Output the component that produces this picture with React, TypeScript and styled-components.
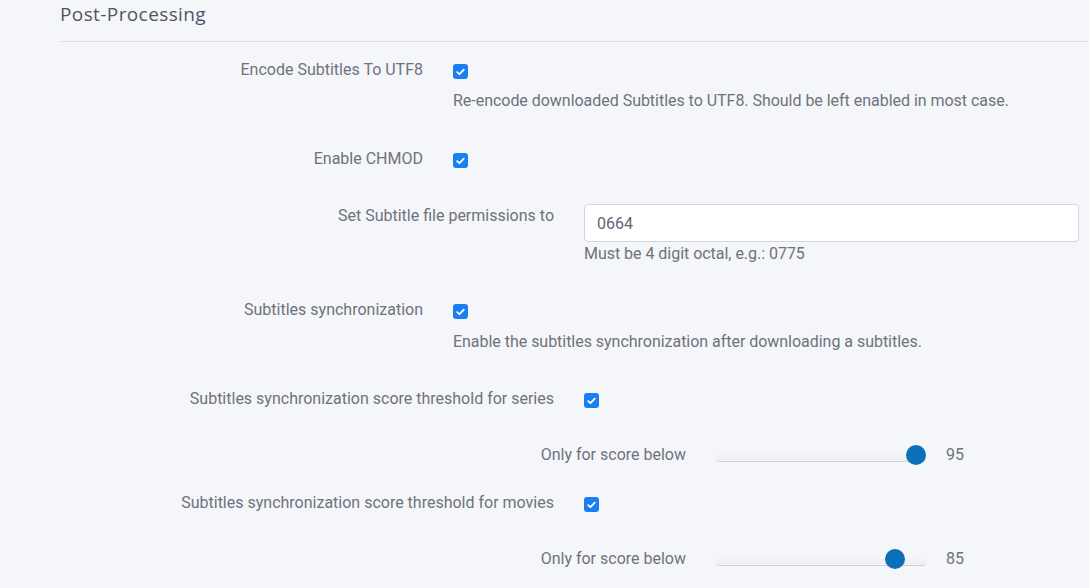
import React from "react";
import styled, { createGlobalStyle } from "styled-components";

const GlobalStyle = createGlobalStyle`
  html, body { margin: 0; padding: 0; background: #f5f6fa; }
  body { font-family: Roboto, "Liberation Sans", sans-serif; }
  * { box-sizing: border-box; }
`;

const Page = styled.div`
  padding: 0 10px 0 60px;
  min-height: 588px;
  background: #f5f6fa;
  overflow: hidden;
`;

const Header = styled.div`
  height: 42px;
  border-bottom: 1px solid #dcdfe3;
  margin-right: -10px;
  display: flex;
  align-items: flex-start;
`;

const Title = styled.h4`
  margin: 0;
  padding-top: 2px;
  font-family: "Open Sans", "Noto Sans", sans-serif;
  font-weight: 400;
  font-size: 19px;
  line-height: 24px;
  color: #4e5663;
  letter-spacing: 0.4px;
`;

const Section = styled.div`
  display: flex;
  flex-direction: column;
`;

const Row = styled.div<{ $labelWidth: number; $top: number }>`
  display: grid;
  grid-template-columns: ${(p) => p.$labelWidth}px 1fr;
  column-gap: 30px;
  margin-top: ${(p) => p.$top}px;
`;

const Label = styled.div`
  text-align: right;
  white-space: nowrap;
  font-size: 16px;
  line-height: 24px;
  color: #6c737c;
`;

const Control = styled.div`
  display: flex;
  flex-direction: column;
  align-items: flex-start;
`;

const CheckLine = styled.div`
  height: 24px;
  display: flex;
  align-items: flex-start;
`;

const Box = styled.span`
  margin-top: 6px;
  width: 15px;
  height: 15px;
  border-radius: 3px;
  background: #1a7ff1;
  display: flex;
  align-items: center;
  justify-content: center;
`;

const Help = styled.div<{ $top: number }>`
  margin-top: ${(p) => p.$top}px;
  font-size: 16px;
  line-height: 24px;
  color: #6c737c;
  letter-spacing: -0.03px;
`;

const Input = styled.div`
  width: 100%;
  height: 38px;
  border: 1px solid #d2d6db;
  border-radius: 4px;
  background: #fff;
  padding: 0 12px;
  display: flex;
  align-items: center;
  font-size: 16px;
  color: #5f6670;
`;

const SliderLine = styled.div`
  height: 24px;
  display: flex;
  align-items: center;
  gap: 20px;
`;

const Track = styled.div`
  position: relative;
  width: 210px;
  height: 7px;
  margin-top: 6px;
  border-radius: 4px;
  background: #f0f1f3;
  border-bottom: 1px solid #cdd1d5;
`;

const Thumb = styled.span`
  position: absolute;
  top: 50%;
  width: 20px;
  height: 20px;
  border-radius: 50%;
  background: #0a70b7;
  transform: translate(-50%, -65%);
`;

const Value = styled.span`
  font-size: 16px;
  line-height: 24px;
  color: #6c737c;
`;

const Checkbox = () => (
  <CheckLine>
    <Box>
      <svg width="9" height="8" viewBox="0 0 9 8">
        <path d="M1.2 4.2 L3.4 6.2 L7.8 1.6" fill="none" stroke="#fff" strokeWidth="1.8" strokeLinecap="round" strokeLinejoin="round" />
      </svg>
    </Box>
  </CheckLine>
);

const Slider = ({ value }: { value: number }) => (
  <SliderLine>
    <Track>
      <Thumb style={{ left: `${value}%` }} />
    </Track>
    <Value>{value}</Value>
  </SliderLine>
);

const L1 = 363;
const L2 = 494;
const L3 = 626;

export default function App() {
  return (
    <Page>
      <GlobalStyle />
      <Header>
        <Title>Post-Processing</Title>
      </Header>
      <Section>
        <Row $labelWidth={L1} $top={16}>
          <Label>Encode Subtitles To UTF8</Label>
          <Control>
            <Checkbox />
            <Help $top={7}>Re-encode downloaded Subtitles to UTF8. Should be left enabled in most case.</Help>
          </Control>
        </Row>
        <Row $labelWidth={L1} $top={34}>
          <Label>Enable CHMOD</Label>
          <Control>
            <Checkbox />
          </Control>
        </Row>
        <Row $labelWidth={L2} $top={33}>
          <Label>Set Subtitle file permissions to</Label>
          <Control>
            <Input>0664</Input>
            <Help $top={0}>Must be 4 digit octal, e.g.: 0775</Help>
          </Control>
        </Row>
        <Row $labelWidth={L1} $top={32}>
          <Label>Subtitles synchronization</Label>
          <Control>
            <Checkbox />
            <Help $top={8}>Enable the subtitles synchronization after downloading a subtitles.</Help>
          </Control>
        </Row>
        <Row $labelWidth={L2} $top={33}>
          <Label>Subtitles synchronization score threshold for series</Label>
          <Control>
            <Checkbox />
          </Control>
        </Row>
        <Row $labelWidth={L3} $top={32}>
          <Label>Only for score below</Label>
          <Control>
            <Slider value={95} />
          </Control>
        </Row>
        <Row $labelWidth={L2} $top={24}>
          <Label>Subtitles synchronization score threshold for movies</Label>
          <Control>
            <Checkbox />
          </Control>
        </Row>
        <Row $labelWidth={L3} $top={32}>
          <Label>Only for score below</Label>
          <Control>
            <Slider value={85} />
          </Control>
        </Row>
      </Section>
    </Page>
  );
}
